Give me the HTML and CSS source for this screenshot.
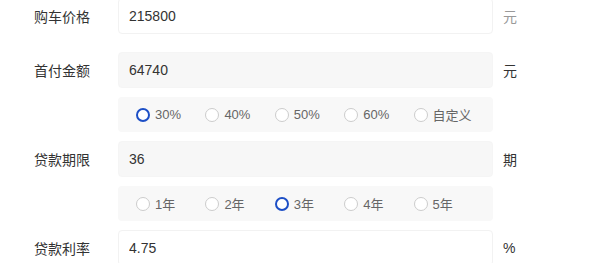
FILE: index.html
```html
<!DOCTYPE html>
<html lang="zh-CN">
<head>
    <meta charset="UTF-8">
    <meta name="viewport" content="width=device-width, initial-scale=1.0">
    <title>贷款计算器</title>
    <link rel="stylesheet" href="styles.css">
</head>
<body>
    <div class="calc">
        <div class="form-row first">
            <label class="form-label">购车价格</label>
            <input class="form-input" type="text" value="215800">
            <span class="form-unit muted">元</span>
        </div>

        <div class="form-row">
            <label class="form-label">首付金额</label>
            <input class="form-input filled" type="text" value="64740" readonly>
            <span class="form-unit">元</span>
        </div>
        <div class="radio-row">
            <label class="radio checked"><span class="radio-dot"></span>30%</label>
            <label class="radio"><span class="radio-dot"></span>40%</label>
            <label class="radio"><span class="radio-dot"></span>50%</label>
            <label class="radio"><span class="radio-dot"></span>60%</label>
            <label class="radio"><span class="radio-dot"></span>自定义</label>
        </div>

        <div class="form-row">
            <label class="form-label">贷款期限</label>
            <input class="form-input filled" type="text" value="36" readonly>
            <span class="form-unit">期</span>
        </div>
        <div class="radio-row">
            <label class="radio"><span class="radio-dot"></span>1年</label>
            <label class="radio"><span class="radio-dot"></span>2年</label>
            <label class="radio checked"><span class="radio-dot"></span>3年</label>
            <label class="radio"><span class="radio-dot"></span>4年</label>
            <label class="radio"><span class="radio-dot"></span>5年</label>
        </div>

        <div class="form-row">
            <label class="form-label">贷款利率</label>
            <input class="form-input" type="text" value="4.75">
            <span class="form-unit">%</span>
        </div>
    </div>
</body>
</html>
```

FILE: styles.css
```css
* {
    margin: 0;
    padding: 0;
    box-sizing: border-box;
}

body {
    font-family: "Liberation Sans", Arial, "Noto Sans CJK SC", sans-serif;
    background: #fff;
    color: #333;
    overflow: hidden;
}

.calc {
    margin-top: -2px;
    padding-left: 34px;
}

.form-row {
    display: flex;
    align-items: center;
    margin-top: 9px;
}

.form-row.first {
    margin-top: 0;
}

.form-row.first + .form-row {
    margin-top: 18px;
}

.form-label {
    width: 84px;
    font-size: 14px;
    color: #333;
}

.form-input {
    width: 375px;
    height: 36px;
    padding: 0 10px;
    border: 1px solid #f2f2f2;
    border-radius: 4px;
    background: #fff;
    font-family: inherit;
    font-size: 14px;
    color: #333;
    outline: none;
}

.form-input.filled {
    background: #f7f7f7;
    border-color: #f5f5f5;
}

.form-unit {
    margin-left: 10px;
    font-size: 14px;
    color: #333;
}

.form-unit.muted {
    color: #999;
}

.radio-row {
    display: flex;
    align-items: center;
    width: 375px;
    height: 35px;
    margin: 9px 0 0 84px;
    padding-left: 18px;
    background: #f8f8f8;
    border-radius: 4px;
}

.radio {
    display: flex;
    align-items: center;
    width: 69.4px;
    font-size: 13px;
    color: #666;
}

.radio-dot {
    width: 14px;
    height: 14px;
    margin-right: 5px;
    border: 1px solid #ccc;
    border-radius: 50%;
    background: #fff;
}

.radio.checked .radio-dot {
    border: 2.5px solid #1d4fc6;
}
```
